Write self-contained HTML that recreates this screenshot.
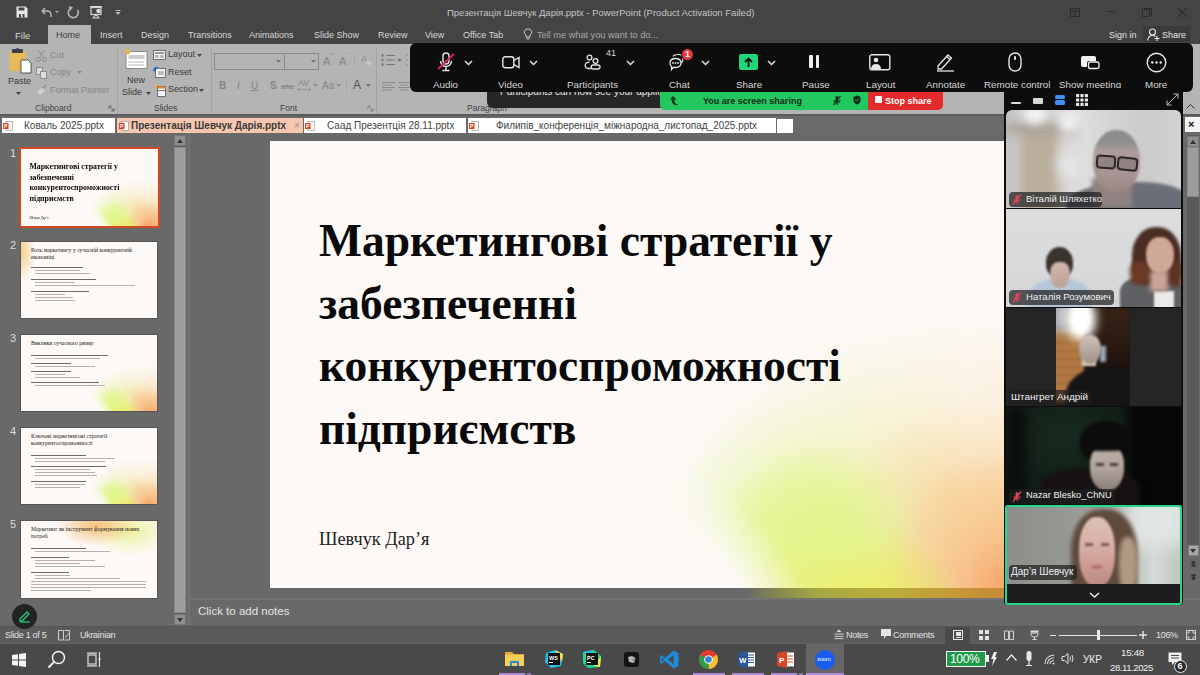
<!DOCTYPE html>
<html><head><meta charset="utf-8">
<style>
*{margin:0;padding:0;box-sizing:border-box}
html,body{width:1200px;height:675px;overflow:hidden;background:#666;font-family:"Liberation Sans",sans-serif}
.a{position:absolute;white-space:nowrap}
svg{position:absolute;overflow:visible}
#title{left:0;top:0;width:1200px;height:44px;background:#444}
#ribbon{left:0;top:44px;width:1200px;height:70px;background:#b4b4b4}
#ribstrip{left:0;top:114px;width:1200px;height:20px;background:#6a6a6a;border-top:2px solid #5a5a5a;border-bottom:1px solid #7a7a7a}
#status{left:0;top:626px;width:1200px;height:18px;background:#5b5b5b;border-top:1px solid #545454;border-bottom:1px solid #626262}
#taskbar{left:0;top:644px;width:1200px;height:31px;background:#494949}
.tt{color:#d8d8d8;font-size:9px;top:30px}
.rt{color:#3a3a3a;font-size:9px}
.rd{color:#858585;font-size:9px}
.gl{color:#404040;font-size:8.5px;top:103px}
.sep{width:1px;background:#a2a2a2;top:48px;height:66px}
.dtab{top:118px;height:15px;background:#fff;font-size:10px;color:#444;line-height:15px}
.picon{top:121px;width:10px;height:10px}

.thumb{background:#fcf9f6;overflow:hidden}
.tl{position:absolute;left:10px;height:1px;background:#b4b2b0}
.mg{position:absolute;left:0;top:0;width:795px;height:447px;overflow:hidden}
.mg::before{content:"";position:absolute;left:0;top:0;width:795px;height:447px;
 background:conic-gradient(from 0deg at 700px 470px,#fbefdc 0deg,#f8d4a4 70deg,#f5a868 115deg,#f4b060 170deg,#f0e068 215deg,#e0f488 255deg,#e2f592 295deg,#f2f2c4 325deg,#fbefdc 360deg);
 -webkit-mask-image:radial-gradient(ellipse 330px 300px at 700px 470px,#000 0%,#000 50%,rgba(0,0,0,0.75) 70%,rgba(0,0,0,0) 100%);
 mask-image:radial-gradient(ellipse 330px 300px at 700px 470px,#000 0%,#000 50%,rgba(0,0,0,0.75) 70%,rgba(0,0,0,0) 100%)}
.mg::after{content:"";position:absolute;left:0;top:0;width:795px;height:447px;
 background:radial-gradient(circle 265px at 300px 565px,rgba(252,249,246,1) 0%,rgba(252,249,246,1) 78%,rgba(252,249,246,0) 100%),
 radial-gradient(ellipse 100px 80px at 552px 382px,rgba(226,245,140,0.95) 0%,rgba(226,245,140,0.6) 45%,rgba(226,245,140,0) 100%),
 radial-gradient(ellipse 120px 100px at 690px 360px,rgba(247,205,135,0.6) 0%,rgba(247,205,135,0.3) 50%,rgba(247,205,135,0) 100%),
 radial-gradient(ellipse 110px 60px at 580px 440px,rgba(242,236,104,0.9) 0%,rgba(242,236,104,0.5) 50%,rgba(242,236,104,0) 100%),
 radial-gradient(ellipse 130px 130px at 735px 440px,rgba(245,160,96,0.9) 0%,rgba(245,160,96,0.45) 50%,rgba(245,160,96,0) 100%)}
.tg1{position:absolute;left:0;top:0;width:137px;height:77px;background:radial-gradient(ellipse 30px 20px at 90px 62px,rgba(225,245,140,1),rgba(225,245,140,0)),radial-gradient(ellipse 34px 19px at 102px 75px,rgba(242,232,95,1),rgba(242,232,95,0)),radial-gradient(ellipse 26px 30px at 126px 72px,rgba(247,165,95,1),rgba(247,165,95,0))}
.tg2{position:absolute;left:0;top:0;width:138px;height:78px;background:radial-gradient(ellipse 14px 30px at 0px 10px,rgba(245,200,120,0.9),rgba(245,200,120,0))}
.tg3{position:absolute;left:0;top:0;width:138px;height:78px;background:radial-gradient(ellipse 30px 18px at 100px 75px,rgba(235,240,120,1),rgba(235,240,120,0)),radial-gradient(ellipse 25px 25px at 130px 70px,rgba(247,165,95,1),rgba(247,165,95,0))}
.tg5{position:absolute;left:0;top:0;width:138px;height:79px;background:radial-gradient(ellipse 40px 20px at 75px 5px,rgba(247,185,110,0.9),rgba(247,185,110,0)),radial-gradient(ellipse 40px 25px at 110px 10px,rgba(235,240,140,0.8),rgba(235,240,140,0))}

.zl{top:79px;font-size:9.8px;color:#d4d4d4}
.chev{position:absolute;top:60px;width:9px;height:6px;overflow:visible}
.chev path{fill:none;stroke:#e0e0e0;stroke-width:1.5}

.tile{overflow:hidden}
.bl{position:absolute}
.lab{height:15px;background:rgba(30,30,30,0.72);border-radius:4px}
.mic{position:absolute;width:10px;height:11px}
.nm{font-size:9.5px;color:#f0f0f0}

.st{top:629.5px;font-size:9px;letter-spacing:-0.3px;color:#e2e2e2}
.ul{top:673px;height:2px;background:#a98ad6}
</style></head><body>
<div id="title" class="a"></div>
<!-- quick access -->
<svg style="left:16px;top:6px" width="12" height="12" viewBox="0 0 12 12"><path d="M0.5 0.5 H9.5 L11.5 2.5 V11.5 H0.5z" fill="#e8e8e8"/><rect x="2.5" y="1.5" width="6" height="3" fill="#444"/><rect x="3" y="8" width="2" height="3.5" fill="#444"/><rect x="6.5" y="8" width="2" height="3.5" fill="#444"/></svg>
<svg style="left:39px;top:6px" width="20" height="13" viewBox="0 0 20 13"><path d="M3 5 L8 5 Q12 5 12 9 L12 11 M3 5 L6 2 M3 5 L6 8" fill="none" stroke="#b8b8b8" stroke-width="1.5"/><path d="M16 5 L20 5 L18 7z" fill="#b8b8b8"/></svg>
<svg style="left:67px;top:6px" width="13" height="13" viewBox="0 0 13 13"><path d="M4 2.2 A5 5 0 1 0 10.5 4" fill="none" stroke="#b8b8b8" stroke-width="1.6"/><path d="M1.5 0.5 L6 1 L3.5 4.5z" fill="#b8b8b8"/></svg>
<svg style="left:89px;top:5px" width="15" height="15" viewBox="0 0 15 15"><rect x="1" y="1" width="12" height="1.4" fill="#d8d8d8"/><rect x="2" y="2.5" width="10" height="7" fill="none" stroke="#d8d8d8" stroke-width="1.2"/><path d="M7 9.5 L4 13 L10 13z" fill="none" stroke="#d8d8d8" stroke-width="1.1"/><circle cx="9.5" cy="6" r="2.3" fill="#d8d8d8"/></svg>
<svg style="left:115px;top:10px" width="6" height="6" viewBox="0 0 6 6"><rect x="0.5" y="0" width="5" height="1" fill="#bbb"/><path d="M0.5 2 L5.5 2 L3 5z" fill="#bbb"/></svg>
<div class="a" style="left:447px;top:7px;font-size:9.5px;color:#c4c4c4">Презентація Шевчук Дарія.pptx - PowerPoint (Product Activation Failed)</div>
<!-- window buttons -->
<svg style="left:1070px;top:8px" width="10" height="9" viewBox="0 0 10 9"><rect x="0.5" y="0.5" width="9" height="8" fill="none" stroke="#2c2c2c"/><path d="M0.5 3 H9.5 M5 3 V8.5" stroke="#2c2c2c"/></svg>
<div class="a" style="left:1106px;top:11px;width:9px;height:1px;background:#2c2c2c"></div>
<svg style="left:1142px;top:8px" width="10" height="9" viewBox="0 0 10 9"><rect x="0.5" y="1.5" width="7" height="7" fill="none" stroke="#2c2c2c"/><path d="M2 1.5 V0.5 H9.5 V7 H8" fill="none" stroke="#2c2c2c"/></svg>
<svg style="left:1178px;top:8px" width="9" height="9" viewBox="0 0 9 9"><path d="M0 0 L9 9 M9 0 L0 9" stroke="#2c2c2c" stroke-width="1.1"/></svg>
<!-- tabs -->
<div class="a" style="left:48px;top:25px;width:43px;height:19px;background:#b4b4b4"></div>
<div class="a tt" style="left:15px;font-size:9.5px">File</div>
<div class="a tt" style="left:56px;color:#3c3c3c">Home</div>
<div class="a tt" style="left:100px">Insert</div>
<div class="a tt" style="left:141px">Design</div>
<div class="a tt" style="left:188px">Transitions</div>
<div class="a tt" style="left:249px">Animations</div>
<div class="a tt" style="left:314px">Slide Show</div>
<div class="a tt" style="left:378px">Review</div>
<div class="a tt" style="left:425px">View</div>
<div class="a tt" style="left:463px">Office Tab</div>
<svg style="left:524px;top:28px" width="8" height="12" viewBox="0 0 8 12"><path d="M4 1 A3.2 3.2 0 0 1 6 7 L6 9 L2 9 L2 7 A3.2 3.2 0 0 1 4 1z" fill="none" stroke="#c8c8c8" stroke-width="1"/><rect x="2.5" y="10" width="3" height="1.2" fill="#c8c8c8"/></svg>
<div class="a tt" style="left:537px;color:#a8a8a8;font-size:9.2px">Tell me what you want to do...</div>
<div class="a tt" style="left:1109px;color:#e0e0e0">Sign in</div>
<div class="a" style="left:1143px;top:26px;width:47px;height:16px;background:#3a3a3a"></div>
<svg style="left:1147px;top:28px" width="13" height="13" viewBox="0 0 13 13"><circle cx="5.5" cy="4" r="3" fill="none" stroke="#e8e8e8" stroke-width="1.1"/><path d="M0.5 12.5 Q1.5 7.5 5.5 7.5 Q7.5 7.5 8.5 8.5" fill="none" stroke="#e8e8e8" stroke-width="1.1"/><path d="M10 8 V13 M7.5 10.5 H12.5" stroke="#e8e8e8" stroke-width="1.1"/></svg>
<div class="a tt" style="left:1162px;color:#e8e8e8">Share</div>

<div id="ribbon" class="a"></div>
<!-- clipboard -->
<svg style="left:9px;top:48px" width="24" height="26" viewBox="0 0 24 26"><rect x="0.5" y="3" width="16.5" height="20" fill="#e8b95a"/><rect x="3" y="1" width="11" height="4" rx="1" fill="#3c3c4c"/><circle cx="8.5" cy="1.5" r="1.5" fill="#3c3c4c"/><path d="M12 12 H19 L22 15 V25 H12z" fill="#fff" stroke="#333" stroke-width="0.8"/></svg>
<div class="a rt" style="left:8px;top:76px;font-size:9px">Paste</div>
<svg style="left:16px;top:92px" width="5" height="3" viewBox="0 0 5 3"><path d="M0 0 H5 L2.5 3z" fill="#444"/></svg>
<svg style="left:36px;top:50px" width="11" height="12" viewBox="0 0 11 12"><path d="M2 0 L8 8 M9 0 L3 8" stroke="#8c8c8c" stroke-width="1"/><circle cx="2.5" cy="9.5" r="2" fill="none" stroke="#8c8c8c"/><circle cx="8.5" cy="9.5" r="2" fill="none" stroke="#8c8c8c"/></svg>
<div class="a rd" style="left:50px;top:50px;font-size:9px">Cut</div>
<svg style="left:36px;top:67px" width="11" height="12" viewBox="0 0 11 12"><rect x="0.5" y="0.5" width="6" height="7" fill="#ddd" stroke="#8c8c8c"/><rect x="4.5" y="4.5" width="6" height="7" fill="#ddd" stroke="#8c8c8c"/></svg>
<div class="a rd" style="left:50px;top:67px;font-size:9px">Copy</div>
<svg style="left:77px;top:71px" width="5" height="3" viewBox="0 0 5 3"><path d="M0 0 H5 L2.5 3z" fill="#8c8c8c"/></svg>
<svg style="left:37px;top:85px" width="10" height="10" viewBox="0 0 10 10"><path d="M0 7 L5 3 L8 6 L3 10z" fill="#cfcfcf"/><path d="M6 3 L9 0" stroke="#8c8c8c" stroke-width="1.5"/></svg>
<div class="a rd" style="left:50px;top:85px;font-size:9px">Format Painter</div>
<div class="a gl" style="left:35px">Clipboard</div>
<svg style="left:109px;top:106px" width="5" height="5" viewBox="0 0 5 5"><path d="M0 0 H3 M0 0 V3 M1 1 L5 5 M5 2 V5 H2" stroke="#555" stroke-width="0.8" fill="none"/></svg>
<div class="a sep" style="left:117px"></div>
<!-- slides -->
<svg style="left:124px;top:48px" width="24" height="22" viewBox="0 0 24 22"><rect x="2" y="3.5" width="21" height="17" fill="#fff" stroke="#777" stroke-width="0.8"/><rect x="4.5" y="7" width="16" height="4" fill="#ccc"/><path d="M4.5 14 H20 M4.5 17 H20" stroke="#aaa" stroke-width="0.8"/><circle cx="3.5" cy="3.5" r="3" fill="#e0b060"/></svg>
<div class="a rt" style="left:127px;top:75px;font-size:9px">New</div>
<div class="a rt" style="left:122px;top:87px;font-size:9px">Slide</div>
<svg style="left:146px;top:92px" width="5" height="3" viewBox="0 0 5 3"><path d="M0 0 H5 L2.5 3z" fill="#444"/></svg>
<svg style="left:153px;top:50px" width="13" height="10" viewBox="0 0 13 10"><rect x="0.5" y="0.5" width="12" height="9" fill="#f4f4f4" stroke="#555" stroke-width="0.8"/><rect x="2" y="2" width="9" height="2" fill="#999"/><rect x="2" y="5" width="4" height="3" fill="#bbb"/><rect x="7" y="5" width="4" height="3" fill="#bbb"/></svg>
<div class="a rt" style="left:168px;top:49px;font-size:9px">Layout</div>
<svg style="left:197px;top:54px" width="5" height="3" viewBox="0 0 5 3"><path d="M0 0 H5 L2.5 3z" fill="#444"/></svg>
<svg style="left:153px;top:66px" width="13" height="12" viewBox="0 0 13 12"><rect x="2.5" y="2.5" width="10" height="9" fill="#f4f4f4" stroke="#555" stroke-width="0.8"/><rect x="5" y="5" width="6" height="4" fill="#bbb"/><path d="M1 5 Q1 1 5 1.5" fill="none" stroke="#2a6ab8" stroke-width="1.6"/><path d="M0 3.5 L2 6 L3.5 3z" fill="#2a6ab8"/></svg>
<div class="a rt" style="left:168px;top:67px;font-size:9px">Reset</div>
<svg style="left:154px;top:84px" width="12" height="13" viewBox="0 0 12 13"><circle cx="2.5" cy="2.5" r="2.3" fill="#e0b060"/><rect x="3.5" y="2.5" width="8" height="10" fill="#f4f4f4" stroke="#555" stroke-width="0.8"/><rect x="3.5" y="2.5" width="8" height="2" fill="#e08a3c"/><path d="M3.5 6.5 H11.5" stroke="#555" stroke-width="0.8"/></svg>
<div class="a rt" style="left:168px;top:84px;font-size:9px">Section</div>
<svg style="left:199px;top:89px" width="5" height="3" viewBox="0 0 5 3"><path d="M0 0 H5 L2.5 3z" fill="#444"/></svg>
<div class="a gl" style="left:154px">Slides</div>
<div class="a sep" style="left:211px"></div>
<!-- font -->
<div class="a" style="left:214px;top:53px;width:105px;height:17px;border:1px solid #8a8a8a"></div>
<div class="a" style="left:284px;top:53px;width:1px;height:17px;background:#8a8a8a"></div>
<svg style="left:276px;top:60px" width="5" height="3" viewBox="0 0 5 3"><path d="M0 0 H5 L2.5 3z" fill="#777"/></svg>
<svg style="left:311px;top:60px" width="5" height="3" viewBox="0 0 5 3"><path d="M0 0 H5 L2.5 3z" fill="#777"/></svg>
<div class="a rd" style="left:323px;top:55px;font-size:11px">A</div><div class="a rd" style="left:330px;top:52px;font-size:6px">^</div>
<div class="a rd" style="left:339px;top:55px;font-size:11px">A</div><div class="a rd" style="left:346px;top:52px;font-size:6px">ˇ</div>
<div class="a" style="left:354px;top:54px;width:1px;height:13px;background:#a6a6a6"></div>
<div class="a rd" style="left:361px;top:54px;font-size:9px">A</div>
<svg style="left:365px;top:60px" width="7" height="6" viewBox="0 0 7 6"><path d="M0 3 L3 0 L7 3 L4 6z" fill="#c4c4c4"/></svg>
<div class="a rd" style="left:219px;top:80px;font-size:10px;font-weight:bold">B</div>
<div class="a rd" style="left:237px;top:80px;font-size:10px;font-style:italic">I</div>
<div class="a rd" style="left:251px;top:80px;font-size:10px;text-decoration:underline">U</div>
<div class="a rd" style="left:270px;top:80px;font-size:10px;font-weight:bold">S</div>
<div class="a rd" style="left:281px;top:82px;font-size:8px;text-decoration:line-through">abc</div>
<div class="a rd" style="left:298px;top:78px;font-size:9px">AV</div>
<svg style="left:298px;top:88px" width="13" height="3" viewBox="0 0 13 3"><path d="M0 1.5 H13 M0 1.5 L2 0 M0 1.5 L2 3 M13 1.5 L11 0 M13 1.5 L11 3" stroke="#8c8c8c" stroke-width="0.7"/></svg>
<svg style="left:313px;top:84px" width="5" height="3" viewBox="0 0 5 3"><path d="M0 0 H5 L2.5 3z" fill="#8c8c8c"/></svg>
<div class="a rd" style="left:322px;top:80px;font-size:10px">Aa</div>
<svg style="left:336px;top:84px" width="5" height="3" viewBox="0 0 5 3"><path d="M0 0 H5 L2.5 3z" fill="#8c8c8c"/></svg>
<div class="a" style="left:346px;top:78px;width:1px;height:14px;background:#a6a6a6"></div>
<div class="a rt" style="left:353px;top:78px;font-size:12px;color:#555">A</div>
<svg style="left:366px;top:84px" width="5" height="3" viewBox="0 0 5 3"><path d="M0 0 H5 L2.5 3z" fill="#777"/></svg>
<div class="a gl" style="left:280px">Font</div>
<svg style="left:368px;top:106px" width="5" height="5" viewBox="0 0 5 5"><path d="M0 0 H3 M0 0 V3 M1 1 L5 5 M5 2 V5 H2" stroke="#777" stroke-width="0.8" fill="none"/></svg>
<div class="a sep" style="left:376px"></div>
<!-- paragraph -->
<svg style="left:381px;top:54px" width="18" height="12" viewBox="0 0 18 12"><g fill="#777"><circle cx="1.5" cy="1.5" r="1.2"/><circle cx="1.5" cy="6" r="1.2"/><circle cx="1.5" cy="10.5" r="1.2"/></g><path d="M5 1.5 H14 M5 6 H14 M5 10.5 H14" stroke="#777" stroke-width="1"/></svg>
<svg style="left:397px;top:59px" width="5" height="3" viewBox="0 0 5 3"><path d="M0 0 H5 L2.5 3z" fill="#777"/></svg>
<svg style="left:405px;top:54px" width="4" height="12" viewBox="0 0 4 12"><path d="M1 1 H3 M1 6 H3 M1 11 H3" stroke="#888" stroke-width="0.8"/></svg>
<svg style="left:382px;top:82px" width="13" height="9" viewBox="0 0 13 9"><path d="M0 0.5 H13 M0 3 H10 M0 5.5 H13 M0 8 H10" stroke="#888" stroke-width="0.9"/></svg>
<svg style="left:398px;top:82px" width="12" height="9" viewBox="0 0 12 9"><path d="M0 0.5 H12 M2 3 H10 M0 5.5 H12 M2 8 H10" stroke="#888" stroke-width="0.9"/></svg>
<div class="a gl" style="left:467px">Paragraph</div>

<div id="ribstrip" class="a"></div>
<!-- doc tabs -->
<div class="a dtab" style="left:2px;width:113px"><span style="position:absolute;left:22px">Коваль 2025.pptx</span></div>
<div class="a dtab" style="left:117px;width:186px;background:#f6c6ae;color:#3a3a3a;font-weight:bold"><span style="position:absolute;left:14px">Презентація Шевчук Дарія.pptx</span><span style="position:absolute;left:177px;font-weight:normal;color:#999;font-size:10px">×</span></div>
<div class="a dtab" style="left:304px;width:162px"><span style="position:absolute;left:23px">Саад Презентція 28.11.pptx</span></div>
<div class="a dtab" style="left:468px;width:308px"><span style="position:absolute;left:28px">Филипів_конференція_міжнародна_листопад_2025.pptx</span></div>
<div class="a dtab" style="left:777px;width:16px;top:119px;height:14px"></div>
<svg class="picon" style="left:3px" viewBox="0 0 10 10"><rect x="3" y="0.5" width="6.5" height="9" fill="#fff" stroke="#999" stroke-width="0.7"/><rect x="0" y="2" width="5.5" height="6" fill="#d04423"/><text x="1" y="7" font-size="5" fill="#fff" font-family="Liberation Sans" font-weight="bold">P</text></svg>
<svg class="picon" style="left:119px" viewBox="0 0 10 10"><rect x="3" y="0.5" width="6.5" height="9" fill="#fff" stroke="#999" stroke-width="0.7"/><rect x="0" y="2" width="5.5" height="6" fill="#d04423"/><text x="1" y="7" font-size="5" fill="#fff" font-family="Liberation Sans" font-weight="bold">P</text></svg>
<svg class="picon" style="left:305px" viewBox="0 0 10 10"><rect x="3" y="0.5" width="6.5" height="9" fill="#fff" stroke="#999" stroke-width="0.7"/><rect x="0" y="2" width="5.5" height="6" fill="#d04423"/><text x="1" y="7" font-size="5" fill="#fff" font-family="Liberation Sans" font-weight="bold">P</text></svg>
<svg class="picon" style="left:469px" viewBox="0 0 10 10"><rect x="3" y="0.5" width="6.5" height="9" fill="#fff" stroke="#999" stroke-width="0.7"/><rect x="0" y="2" width="5.5" height="6" fill="#d04423"/><text x="1" y="7" font-size="5" fill="#fff" font-family="Liberation Sans" font-weight="bold">P</text></svg>


<!-- work area -->
<div class="a" style="left:0;top:133px;width:1200px;height:493px;background:#696969"></div>
<!-- thumbnails pane scrollbar -->
<div class="a" style="left:174px;top:135px;width:12px;height:490px;background:#5a5a5a"></div>
<div class="a" style="left:174px;top:135px;width:12px;height:11px;background:#8e8e8e;border:1px solid #777"></div>
<svg style="left:177px;top:139px" width="6" height="4" viewBox="0 0 6 4"><path d="M0 4 H6 L3 0z" fill="#333"/></svg>
<div class="a" style="left:174px;top:147px;width:12px;height:466px;background:#9c9c9c;border:1px solid #8a8a8a"></div>
<div class="a" style="left:174px;top:614px;width:12px;height:11px;background:#8e8e8e;border:1px solid #777"></div>
<svg style="left:177px;top:618px" width="6" height="4" viewBox="0 0 6 4"><path d="M0 0 H6 L3 4z" fill="#333"/></svg>
<div class="a" style="left:188px;top:133px;width:2px;height:493px;background:#737373"></div>
<!-- thumbnails -->
<div class="a" style="left:10px;top:147px;font-size:11px;color:#ddd">1</div>
<div class="a" style="left:10px;top:239px;font-size:11px;color:#ddd">2</div>
<div class="a" style="left:10px;top:332px;font-size:11px;color:#ddd">3</div>
<div class="a" style="left:10px;top:425px;font-size:11px;color:#ddd">4</div>
<div class="a" style="left:10px;top:518px;font-size:11px;color:#ddd">5</div>
<div class="a" style="left:19px;top:147px;width:141px;height:81px;background:#d24726"></div>
<div class="a thumb" style="left:21px;top:149px;width:137px;height:77px">
  <div style="position:absolute;left:0;top:0;width:795px;height:447px;transform:scale(0.1723);transform-origin:0 0;background:#fcf9f6">
  <div class="mg"></div>
  <div class="a" style="left:49px;top:69px;font-family:'Liberation Serif',serif;font-weight:bold;font-size:45.5px;line-height:62.5px;color:#0a0a0a">Маркетингові стратегії у<br>забезпеченні<br>конкурентоспроможності<br>підприємств</div>
  <div class="a" style="left:49px;top:388px;font-family:'Liberation Serif',serif;font-size:18.3px;color:#1e1e1e">Шевчук Дар’я</div>
  </div>
</div>
<div class="a thumb" style="left:20px;top:241px;width:138px;height:78px;border:1px solid #555">
  <div class="tg2"></div>
  <div class="a" style="left:10px;top:4.8px;font-family:'Liberation Serif',serif;font-size:5.7px;line-height:7.4px;color:#222">Роль маркетингу у сучасній конкурентній<br>економіці</div>
  <div class="tl" style="top:25px;width:52px;height:1.2px;background:#6e6c6a"></div>
  <div class="tl" style="top:28px;left:14px;width:45px"></div>
  <div class="tl" style="top:31px;left:14px;width:55px"></div>
  <div class="tl" style="top:37px;width:65px;height:1.2px;background:#6e6c6a"></div>
  <div class="tl" style="top:40px;left:14px;width:40px"></div>
  <div class="tl" style="top:43px;left:14px;width:100px"></div>
  <div class="tl" style="top:49px;width:58px;height:1.2px;background:#6e6c6a"></div>
  <div class="tl" style="top:52px;left:14px;width:30px"></div>
  <div class="tl" style="top:55px;left:14px;width:38px"></div>
  <div class="tl" style="top:58px;left:14px;width:40px"></div>
</div>
<div class="a thumb" style="left:20px;top:334px;width:138px;height:78px;border:1px solid #555">
  <div style="position:absolute;left:0;top:0;width:795px;height:447px;transform:scale(0.1723);transform-origin:0 0"><div class="mg"></div></div>
  <div class="a" style="left:10px;top:4.5px;font-family:'Liberation Serif',serif;font-size:5.7px;line-height:7.4px;color:#222">Виклики сучасного ринку</div>
  <div class="tl" style="top:20px;width:77px;height:1.2px;background:#6e6c6a"></div>
  <div class="tl" style="top:23px;left:14px;width:65px"></div>
  <div class="tl" style="top:28px;width:40px;height:1.2px;background:#6e6c6a"></div>
  <div class="tl" style="top:31px;left:14px;width:60px"></div>
  <div class="tl" style="top:36px;width:40px;height:1.2px;background:#6e6c6a"></div>
  <div class="tl" style="top:39px;left:14px;width:30px"></div>
  <div class="tl" style="top:42px;left:14px;width:45px"></div>
  <div class="tl" style="top:47px;width:68px;height:1.2px;background:#6e6c6a"></div>
  <div class="tl" style="top:50px;left:14px;width:70px"></div>
</div>
<div class="a thumb" style="left:20px;top:427px;width:138px;height:78px;border:1px solid #555">
  <div style="position:absolute;left:0;top:0;width:795px;height:447px;transform:scale(0.1723);transform-origin:0 0"><div class="mg"></div></div>
  <div class="a" style="left:10px;top:4.8px;font-family:'Liberation Serif',serif;font-size:5.7px;line-height:7.4px;color:#222">Ключові маркетингові стратегії<br>конкурентоспроможності</div>
  <div class="tl" style="top:27px;width:55px;height:1.2px;background:#6e6c6a"></div>
  <div class="tl" style="top:30px;left:14px;width:80px"></div>
  <div class="tl" style="top:33px;left:14px;width:70px"></div>
  <div class="tl" style="top:38px;width:75px;height:1.2px;background:#6e6c6a"></div>
  <div class="tl" style="top:41px;left:14px;width:55px"></div>
  <div class="tl" style="top:44px;left:14px;width:60px"></div>
  <div class="tl" style="top:47px;left:14px;width:62px"></div>
  <div class="tl" style="top:53px;width:55px;height:1.2px;background:#6e6c6a"></div>
  <div class="tl" style="top:56px;left:14px;width:50px"></div>
  <div class="tl" style="top:59px;left:14px;width:45px"></div>
</div>
<div class="a thumb" style="left:20px;top:520px;width:138px;height:79px;border:1px solid #555">
  <div class="tg5"></div>
  <div class="a" style="left:10px;top:4.8px;font-family:'Liberation Serif',serif;font-size:5.7px;line-height:7.4px;color:#222">Маркетинг як інструмент формування нових<br>потреб</div>
  <div class="tl" style="top:27px;width:55px;height:1.2px;background:#6e6c6a"></div>
  <div class="tl" style="top:30px;left:14px;width:75px"></div>
  <div class="tl" style="top:36px;width:38px;height:1.2px;background:#6e6c6a"></div>
  <div class="tl" style="top:39px;left:14px;width:60px"></div>
  <div class="tl" style="top:42px;left:14px;width:45px"></div>
  <div class="tl" style="top:45px;left:14px;width:70px"></div>
  <div class="tl" style="top:51px;width:38px;height:1.2px;background:#6e6c6a"></div>
  <div class="tl" style="top:54px;left:14px;width:35px"></div>
  <div class="tl" style="top:57px;left:14px;width:85px"></div>
  <div class="tl" style="top:60px;width:115px"></div>
  <div class="tl" style="top:63px;width:115px"></div>
  <div class="tl" style="top:66px;width:115px"></div>
  <div class="tl" style="top:69px;width:60px"></div>
</div>
<!-- main slide -->
<div class="a" id="slide" style="left:270px;top:141px;width:795px;height:447px;background:#fcf9f6;overflow:hidden">
  <div class="mg"></div>
  <div class="a" style="left:49px;top:69px;font-family:'Liberation Serif',serif;font-weight:bold;font-size:45.5px;line-height:62.5px;color:#0a0a0a">Маркетингові стратегії у<br>забезпеченні<br>конкурентоспроможності<br>підприємств</div>
  <div class="a" style="left:49px;top:388px;font-family:'Liberation Serif',serif;font-size:18.3px;color:#1e1e1e">Шевчук Дар’я</div>
</div>
<div class="a" style="left:270px;top:588px;width:795px;height:10px;background:linear-gradient(90deg,#696969 0%,#696969 60%,#868a4c 64%,#a6a844 69%,#bcac3a 78%,#c49c36 85%,#c88438 94%,#c87838 100%)"></div>
<div class="a" style="left:190px;top:598px;width:1010px;height:2px;background:#737373"></div>
<div class="a" style="left:198px;top:605.3px;font-size:11.5px;color:#e4e4e4">Click to add notes</div>
<!-- right scrollbar -->
<div class="a" style="left:1185px;top:117px;width:15px;height:15px;background:#f4f4f4"></div>
<div class="a" style="left:1188px;top:118px;font-size:11px;font-weight:bold;color:#111">×</div>
<svg style="left:1186px;top:104px" width="9" height="5" viewBox="0 0 9 5"><path d="M0.5 4.5 L4.5 0.5 L8.5 4.5" fill="none" stroke="#333" stroke-width="1"/></svg>
<div class="a" style="left:1187px;top:135px;width:12px;height:421px;background:#5a5a5a"></div>
<div class="a" style="left:1187px;top:136px;width:12px;height:11px;background:#8e8e8e;border:1px solid #777"></div>
<svg style="left:1190px;top:140px" width="6" height="4" viewBox="0 0 6 4"><path d="M0 4 H6 L3 0z" fill="#333"/></svg>
<div class="a" style="left:1187px;top:147px;width:12px;height:50px;background:#9c9c9c;border:1px solid #8a8a8a"></div>
<div class="a" style="left:1187.5px;top:545px;width:11px;height:11px;background:#a6a6a6;border:1px solid #808080"></div>
<svg style="left:1190px;top:549px" width="6" height="4" viewBox="0 0 6 4"><path d="M0 0 H6 L3 4z" fill="#333"/></svg>
<svg style="left:1190px;top:560px" width="7" height="7" viewBox="0 0 7 7"><path d="M0.5 3.5 L3.5 0.5 L6.5 3.5z M0.5 6.5 L3.5 3.5 L6.5 6.5z" fill="#2e2e2e"/></svg><svg style="left:1190px;top:573.5px" width="7" height="7" viewBox="0 0 7 7"><path d="M0.5 0.5 L3.5 3.5 L6.5 0.5z M0.5 3.5 L3.5 6.5 L6.5 3.5z" fill="#2e2e2e"/></svg>


<div id="status" class="a"></div>
<div class="a st" style="left:5px">Slide 1 of 5</div>
<svg style="left:58px;top:630px" width="12" height="11" viewBox="0 0 12 11"><path d="M0.5 0.5 H5.5 V10 H0.5z M6.5 0.5 H11.5 V10 H6.5" fill="none" stroke="#dcdcdc" stroke-width="0.9"/><path d="M7.5 7.5 L10.5 3.5" stroke="#dcdcdc" stroke-width="0.9"/></svg>
<div class="a st" style="left:80px">Ukrainian</div>
<svg style="left:834px;top:629px" width="10" height="11" viewBox="0 0 10 11"><path d="M2.5 3 L5 0.5 L7.5 3z" fill="#dcdcdc"/><path d="M0.5 5 H9.5 M0.5 7.3 H9.5 M0.5 9.6 H9.5" stroke="#dcdcdc" stroke-width="0.9"/></svg>
<div class="a st" style="left:846px">Notes</div>
<svg style="left:881px;top:629px" width="10" height="11" viewBox="0 0 10 11"><path d="M0 0 H10 V7 H5 L3 10 L3 7 H0z" fill="#e4e4e4"/></svg>
<div class="a st" style="left:893px">Comments</div>
<div class="a" style="left:945px;top:627px;width:25px;height:17px;background:#4a4a4a"></div>
<svg style="left:953px;top:630px" width="10" height="10" viewBox="0 0 10 10"><rect x="0.5" y="0.5" width="9" height="9" fill="none" stroke="#e8e8e8"/><rect x="3" y="2" width="5" height="4" fill="#e8e8e8"/><path d="M3 7.5 H8" stroke="#e8e8e8"/></svg>
<svg style="left:979px;top:630px" width="10" height="10" viewBox="0 0 10 10"><g fill="#e4e4e4"><rect x="0" y="0" width="4" height="4"/><rect x="6" y="0" width="4" height="4"/><rect x="0" y="6" width="4" height="4"/><rect x="6" y="6" width="4" height="4"/></g></svg>
<svg style="left:1004px;top:630px" width="10" height="10" viewBox="0 0 10 10"><path d="M0.5 1 H4.5 V9.5 H0.5z M5.5 1 H9.5 V9.5 H5.5z" fill="none" stroke="#dcdcdc" stroke-width="0.9"/></svg>
<svg style="left:1030px;top:630px" width="9" height="10" viewBox="0 0 9 10"><rect x="0.5" y="0.5" width="8" height="2" fill="#dcdcdc"/><path d="M1 3 H8 V5 Q8 7 4.5 7 Q1 7 1 5z" fill="none" stroke="#dcdcdc" stroke-width="0.9"/><path d="M4.5 7 V9 M2.5 9.5 H6.5" stroke="#dcdcdc"/></svg>
<div class="a" style="left:1050px;top:634.5px;width:6px;height:1.5px;background:#e4e4e4"></div>
<div class="a" style="left:1059px;top:635px;width:78px;height:1px;background:#e4e4e4"></div>
<div class="a" style="left:1097px;top:630px;width:3px;height:10px;background:#eaeaea"></div>
<svg style="left:1139px;top:631px" width="8" height="8" viewBox="0 0 8 8"><path d="M4 0 V8 M0 4 H8" stroke="#e4e4e4" stroke-width="1.5"/></svg>
<div class="a st" style="left:1156px">106%</div>
<svg style="left:1186px;top:630px" width="10" height="10" viewBox="0 0 10 10"><rect x="0.5" y="0.5" width="9" height="9" fill="none" stroke="#dcdcdc" stroke-width="0.9"/><path d="M3 0.5 V3 H0.5 M7 0.5 V3 H9.5 M0.5 7 H3 V9.5 M9.5 7 H7 V9.5" fill="none" stroke="#dcdcdc" stroke-width="0.9"/></svg>


<div id="taskbar" class="a"></div>
<svg style="left:12px;top:653px" width="14" height="14" viewBox="0 0 14 14"><path d="M0 2 L6 1.2 V6.6 H0z M7 1 L14 0 V6.6 H7z M0 7.4 H6 V12.8 L0 12z M7 7.4 H14 V14 L7 13z" fill="#f4f4f4"/></svg>
<svg style="left:47px;top:650px" width="19" height="19" viewBox="0 0 19 19"><circle cx="11.5" cy="7.5" r="6" fill="none" stroke="#f4f4f4" stroke-width="1.5"/><path d="M7.5 11.5 L1.5 17.5" stroke="#f4f4f4" stroke-width="2"/></svg>
<svg style="left:87px;top:652px" width="14" height="15" viewBox="0 0 14 15"><rect x="1" y="3" width="8" height="9" fill="none" stroke="#dcdcdc" stroke-width="1.2"/><path d="M0 1.2 H10 M0 13.8 H10" stroke="#dcdcdc" stroke-width="1.2"/><path d="M12.5 0 V15" stroke="#dcdcdc" stroke-width="1.2"/><circle cx="12.5" cy="7" r="1" fill="#fff"/></svg>
<!-- explorer -->
<svg style="left:505px;top:651px" width="19" height="16" viewBox="0 0 19 16"><path d="M0 1 H7 L9 3 H19 V15 H0z" fill="#e8a83a"/><rect x="0" y="4" width="19" height="11" fill="#f6cf5a"/><rect x="5" y="10" width="9" height="5" fill="#2b8ad8"/><rect x="7" y="12" width="5" height="3" fill="#f6cf5a"/></svg>
<div class="a ul" style="left:499px;width:26px"></div><div class="a ul" style="left:527px;width:4px;opacity:0.7"></div>
<!-- webstorm -->
<svg style="left:545px;top:650px" width="18" height="18" viewBox="0 0 18 18"><path d="M1 3 L10 0 L18 4 L16 16 L6 18 L0 12z" fill="#23c0f0"/><path d="M10 0 L18 4 L17 12z" fill="#f7e04a"/><rect x="3" y="3" width="12" height="12" fill="#111"/><text x="4" y="10" font-size="5.5" font-family="Liberation Sans" font-weight="bold" fill="#fff">WS</text><rect x="4" y="12" width="4" height="1" fill="#fff"/></svg>
<!-- pycharm -->
<svg style="left:583px;top:650px" width="18" height="18" viewBox="0 0 18 18"><path d="M0 2 L11 0 L18 6 L17 17 L5 18 L0 13z" fill="#21d789"/><path d="M0 2 L11 0 L6 8z" fill="#20c4e8"/><path d="M18 6 L17 17 L11 16z" fill="#fce64a"/><rect x="3" y="3" width="12" height="12" fill="#111"/><text x="4" y="10" font-size="5.5" font-family="Liberation Sans" font-weight="bold" fill="#fff">PC</text><rect x="4" y="12" width="4" height="1" fill="#fff"/></svg>
<!-- cube app -->
<div class="a" style="left:624px;top:652px;width:15px;height:15px;background:#141414;border-radius:3px"></div>
<svg style="left:627px;top:655px" width="9" height="9" viewBox="0 0 9 9"><path d="M1 2 L5 1 L8.5 3 L7 8 L2 7z" fill="#b8b8b8"/><path d="M5 4 L8.5 3 L7 8z" fill="#888"/></svg>
<!-- vscode -->
<svg style="left:660px;top:650px" width="19" height="19" viewBox="0 0 19 19"><path d="M13.5 0.5 L18.5 3 V16 L13.5 18.5 L5 11 L1.5 14 L0 13 V6 L1.5 5 L5 8z M13.5 5 L8 9.5 L13.5 14z M1.8 7 V12 L4 9.5z" fill="#1f8ad8"/></svg>
<!-- chrome -->
<svg style="left:699px;top:650px" width="19" height="19" viewBox="0 0 19 19"><circle cx="9.5" cy="9.5" r="9.5" fill="#e23a2e"/><path d="M9.5 9.5 L1.3 14.25 A9.5 9.5 0 0 1 0.95 5.2 L1.3 4.75 A9.5 9.5 0 0 1 9.5 0 L17.7 4.75z" fill="#e23a2e"/><path d="M9.5 9.5 L17.7 4.75 A9.5 9.5 0 0 1 9.5 19z" fill="#fbc02d"/><path d="M9.5 9.5 L9.5 19 A9.5 9.5 0 0 1 1.3 4.75z" fill="#2e9e48"/><circle cx="9.5" cy="9.5" r="4.3" fill="#fff"/><circle cx="9.5" cy="9.5" r="3.3" fill="#3b7de0"/></svg>
<div class="a ul" style="left:693px;width:32px"></div>
<!-- word -->
<svg style="left:738px;top:651px" width="18" height="17" viewBox="0 0 18 17"><rect x="7" y="1.5" width="10" height="14" fill="#fff"/><path d="M8.5 4 H16 M8.5 6.5 H16 M8.5 9 H16 M8.5 11.5 H16" stroke="#2b5797" stroke-width="1"/><path d="M0 2 L10 0 V17 L0 15z" fill="#2b5797"/><text x="1.2" y="11.5" font-size="7.5" font-family="Liberation Sans" font-weight="bold" fill="#fff">W</text></svg>
<div class="a ul" style="left:732px;width:32px"></div>
<!-- powerpoint -->
<svg style="left:777px;top:651px" width="18" height="17" viewBox="0 0 18 17"><rect x="7" y="1.5" width="10" height="14" fill="#fff"/><path d="M9 5 H16 M9 8 H16 M9 11 H16" stroke="#d24726" stroke-width="1"/><path d="M0 2 L10 0 V17 L0 15z" fill="#d24726"/><text x="2" y="11.5" font-size="8" font-family="Liberation Sans" font-weight="bold" fill="#fff">P</text></svg>
<div class="a ul" style="left:771px;width:26px"></div><div class="a ul" style="left:799px;width:4px;opacity:0.7"></div>
<!-- zoom -->
<div class="a" style="left:806px;top:644px;width:38px;height:31px;background:#666"></div>
<div class="a" style="left:815px;top:650px;width:20px;height:20px;border-radius:50%;background:#1a5cf0"></div>
<div class="a" style="left:817px;top:656px;font-size:6px;letter-spacing:-0.3px;color:#fff">zoom</div>
<div class="a ul" style="left:806px;width:38px"></div>
<!-- zoom annotate floating button -->
<div class="a" style="left:12px;top:604px;width:25px;height:25px;border-radius:50%;background:#232323"></div>
<svg style="left:18px;top:609px" width="14" height="14" viewBox="0 0 14 14"><path d="M2 10 L9 3 L11 5 L4 12 L2 12z" fill="none" stroke="#22c77a" stroke-width="1.3"/><path d="M2 13 H12" stroke="#22c77a" stroke-width="1.3"/></svg>
<!-- tray -->
<div class="a" style="left:946px;top:651px;width:40px;height:16px;border:1.5px solid #f4f4f4;background:#1f9a4a"></div>
<div class="a" style="left:986px;top:655px;width:2.5px;height:7px;background:#f4f4f4"></div>
<div class="a" style="left:950px;top:651.5px;font-size:12px;color:#fff;letter-spacing:-0.3px">100%</div>
<svg style="left:991px;top:652px" width="6" height="14" viewBox="0 0 6 14"><path d="M3 0 H6 L4 5 H6 L1 14 L2.5 7 H0z" fill="#f0f0f0"/></svg>
<svg style="left:1006px;top:654px" width="11" height="7" viewBox="0 0 11 7"><path d="M0.5 6.5 L5.5 1 L10.5 6.5" fill="none" stroke="#eee" stroke-width="1.2"/></svg>
<svg style="left:1025px;top:651px" width="8" height="15" viewBox="0 0 8 15"><rect x="1.5" y="0" width="5" height="10" rx="2.5" fill="#e8e8e8"/><path d="M4 10 V14 M1 14.5 H7" stroke="#e8e8e8" stroke-width="1.2"/></svg>
<svg style="left:1044px;top:653px" width="11" height="12" viewBox="0 0 11 12"><path d="M1 11 Q1 3 10 2 M3.5 11 Q3.5 5.5 10 4.8 M6 11 Q6 8 10 7.5" fill="none" stroke="#ddd" stroke-width="1.1"/><circle cx="9.5" cy="10.5" r="1" fill="#ddd"/></svg>
<svg style="left:1061px;top:652px" width="13" height="13" viewBox="0 0 13 13"><path d="M1 4.5 H3.5 L7 1.5 V11.5 L3.5 8.5 H1z" fill="none" stroke="#e4e4e4" stroke-width="1"/><path d="M9 4.5 Q10 6.5 9 8.5 M11 3 Q12.8 6.5 11 10" fill="none" stroke="#e4e4e4" stroke-width="1"/></svg>
<div class="a" style="left:1083px;top:654px;font-size:10px;color:#f0f0f0">УКР</div>
<div class="a" style="left:1121px;top:647px;font-size:9.8px;letter-spacing:-0.3px;color:#f0f0f0">15:48</div>
<div class="a" style="left:1110px;top:662px;font-size:9.6px;letter-spacing:-0.45px;color:#f0f0f0">28.11.2025</div>
<svg style="left:1168px;top:652px" width="14" height="14" viewBox="0 0 14 14"><path d="M0.5 0.5 H13.5 V10 H7 L4 13 V10 H0.5z" fill="#f0f0f0"/><path d="M3 3.5 H11 M3 6 H11" stroke="#494949" stroke-width="1"/></svg>
<div class="a" style="left:1174px;top:660px;width:13px;height:13px;border-radius:50%;background:#2a2a2a;border:1px solid #eee"></div>
<div class="a" style="left:1177.5px;top:661px;font-size:9px;color:#fff;font-weight:bold">6</div>


<!-- zoom notification (behind toolbar) -->
<div class="a" style="left:487px;top:80px;width:190px;height:28px;background:#262626;border-radius:6px"></div>
<div class="a" style="left:500px;top:85.5px;font-size:10px;color:#e8e8e8">Participants can now see your application</div>
<!-- zoom toolbar -->
<div class="a" style="left:410px;top:43px;width:783px;height:49px;background:#0d0d0d;border-radius:6px"></div>
<div class="a zl" style="left:433px">Audio</div>
<div class="a zl" style="left:498px">Video</div>
<div class="a zl" style="left:567px">Participants</div>
<div class="a zl" style="left:669px">Chat</div>
<div class="a zl" style="left:736px">Share</div>
<div class="a zl" style="left:802px">Pause</div>
<div class="a zl" style="left:866px">Layout</div>
<div class="a zl" style="left:926px">Annotate</div>
<div class="a zl" style="left:984px">Remote control</div>
<div class="a zl" style="left:1059px">Show meeting</div>
<div class="a zl" style="left:1145px">More</div>
<!-- audio -->
<svg style="left:437px;top:52px" width="18" height="20" viewBox="0 0 18 20"><rect x="6" y="1" width="6" height="11" rx="3" fill="none" stroke="#e6e6e6" stroke-width="1.4"/><path d="M3.5 9 A5.5 5.5 0 0 0 14.5 9 M9 14.5 V18 M5.5 18.5 H12.5" fill="none" stroke="#e6e6e6" stroke-width="1.4"/><path d="M1 17 L17 2" stroke="#e0245e" stroke-width="1.8"/></svg>
<svg class="chev" style="left:464px"><path d="M1 1 L4.5 4.5 L8 1"/></svg>
<!-- video -->
<svg style="left:502px;top:56px" width="18" height="13" viewBox="0 0 18 13"><rect x="0.8" y="0.8" width="11" height="11" rx="2.5" fill="none" stroke="#e6e6e6" stroke-width="1.4"/><path d="M12 4.5 L17 1.5 V11.5 L12 8.5" fill="none" stroke="#e6e6e6" stroke-width="1.4"/></svg>
<svg class="chev" style="left:529px"><path d="M1 1 L4.5 4.5 L8 1"/></svg>
<!-- participants -->
<svg style="left:584px;top:54px" width="17" height="16" viewBox="0 0 17 16"><circle cx="5.5" cy="3.5" r="2.4" fill="none" stroke="#e6e6e6" stroke-width="1.3"/><path d="M5.5 8.2 Q1.2 8.2 1.2 11.5 Q1.2 14.5 5 14.5 H7" fill="none" stroke="#e6e6e6" stroke-width="1.3"/><circle cx="11.5" cy="7" r="2.4" fill="none" stroke="#e6e6e6" stroke-width="1.3"/><rect x="7.2" y="11" width="8.8" height="4" rx="2" fill="none" stroke="#e6e6e6" stroke-width="1.3"/></svg>
<div class="a" style="left:606px;top:48px;font-size:9px;color:#d8d8d8">41</div>
<svg class="chev" style="left:626px"><path d="M1 1 L4.5 4.5 L8 1"/></svg>
<!-- chat -->
<svg style="left:668px;top:53px" width="18" height="18" viewBox="0 0 18 18"><path d="M5 3.5 Q6 1.5 10 1.5 Q15 1.5 15 6 Q15 9 13 10" fill="none" stroke="#e6e6e6" stroke-width="1.2"/><path d="M2 10 Q2 5.5 7.5 5.5 Q13 5.5 13 10 Q13 14.5 7.5 14.5 L5 14.5 L3.5 16.5 L3.5 13.5 Q2 12.5 2 10z" fill="#0d0d0d" stroke="#e6e6e6" stroke-width="1.3"/><circle cx="5" cy="10" r="0.9" fill="#e6e6e6"/><circle cx="7.5" cy="10" r="0.9" fill="#e6e6e6"/><circle cx="10" cy="10" r="0.9" fill="#e6e6e6"/></svg>
<div class="a" style="left:681px;top:48px;width:13px;height:13px;border-radius:50%;background:#e5393d;border:1px solid #0d0d0d"></div>
<div class="a" style="left:685px;top:49px;font-size:9px;color:#fff;font-weight:bold">1</div>
<svg class="chev" style="left:701px"><path d="M1 1 L4.5 4.5 L8 1"/></svg>
<!-- share -->
<div class="a" style="left:739px;top:54px;width:19px;height:16px;background:#1fd67a;border-radius:2px"></div>
<svg style="left:744px;top:57px" width="9" height="10" viewBox="0 0 9 10"><path d="M4.5 10 V2 M1 5 L4.5 1.5 L8 5" fill="none" stroke="#0a0a0a" stroke-width="1.8"/></svg>
<svg class="chev" style="left:767px"><path d="M1 1 L4.5 4.5 L8 1"/></svg>
<!-- pause -->
<div class="a" style="left:809px;top:55px;width:3.5px;height:13px;background:#f0f0f0;border-radius:1px"></div>
<div class="a" style="left:815.5px;top:55px;width:3.5px;height:13px;background:#f0f0f0;border-radius:1px"></div>
<!-- layout -->
<svg style="left:869px;top:54px" width="22" height="17" viewBox="0 0 22 17"><rect x="0.8" y="0.8" width="20" height="15" rx="2" fill="none" stroke="#e6e6e6" stroke-width="1.4"/><circle cx="7" cy="6" r="2.3" fill="#e6e6e6"/><path d="M2 15.5 Q2 10 7 10 Q12 10 12 15.5z" fill="#e6e6e6"/></svg>
<!-- annotate -->
<svg style="left:936px;top:52px" width="19" height="20" viewBox="0 0 19 20"><path d="M2 14 L12 3 L15.5 6 L5.5 17 L2 17z M10.5 4.5 L14 7.5" fill="none" stroke="#e6e6e6" stroke-width="1.3"/><path d="M1 19 H18" stroke="#e6e6e6" stroke-width="1.3"/></svg>
<!-- remote control -->
<svg style="left:1008px;top:52px" width="14" height="20" viewBox="0 0 14 20"><rect x="1" y="1" width="12" height="18" rx="6" fill="none" stroke="#e6e6e6" stroke-width="1.4"/><rect x="6" y="4" width="2" height="4" rx="1" fill="#e6e6e6"/></svg>
<!-- show meeting -->
<svg style="left:1080px;top:55px" width="20" height="14" viewBox="0 0 20 14"><path d="M1 3 Q1 1 3 1 H14 Q16 1 16 3 V6 H9 Q7 6 7 8 V12 H3 Q1 12 1 10z" fill="#f0f0f0"/><rect x="8.5" y="7" width="10.5" height="6.5" rx="2" fill="none" stroke="#f0f0f0" stroke-width="1.3"/></svg>
<!-- more -->
<svg style="left:1146px;top:52px" width="21" height="21" viewBox="0 0 21 21"><circle cx="10.5" cy="10.5" r="9.3" fill="none" stroke="#e6e6e6" stroke-width="1.4"/><circle cx="6.3" cy="10.5" r="1.2" fill="#e6e6e6"/><circle cx="10.5" cy="10.5" r="1.2" fill="#e6e6e6"/><circle cx="14.7" cy="10.5" r="1.2" fill="#e6e6e6"/></svg>
<!-- screen sharing bar -->
<div class="a" style="left:660px;top:92px;width:210px;height:18px;background:#22c760;border-radius:0 0 0 5px"></div>
<div class="a" style="left:868px;top:92px;width:75px;height:18px;background:#e42a2a;border-radius:0 0 5px 0"></div>
<svg style="left:668px;top:95px" width="11" height="11" viewBox="0 0 11 11"><path d="M1.5 4.5 L5 1 L8.5 4.5 L6.5 4.5 L6.5 6.5 Q7 9 10 9.5 L9 10.5 Q4.5 10 3.8 6.5 L3.8 4.5z" fill="#0f3a1c"/></svg>
<div class="a" style="left:703px;top:96px;font-size:9px;font-weight:bold;color:#0f2a16">You are screen sharing</div>
<svg style="left:833px;top:95px" width="8" height="11" viewBox="0 0 8 11"><rect x="2.5" y="1" width="3" height="6" rx="1.5" fill="#0f2a16"/><path d="M1 5 Q1 8 4 8 Q7 8 7 5 M4 8 V10" fill="none" stroke="#0f2a16" stroke-width="1"/><path d="M0.5 10 L7.5 1" stroke="#0f2a16" stroke-width="1.2"/></svg>
<svg style="left:853px;top:95px" width="8" height="10" viewBox="0 0 8 10"><path d="M4 0.5 L7.5 2 V5 Q7.5 8 4 9.5 Q0.5 8 0.5 5 V2z" fill="#0f2a16"/><path d="M2.3 4.8 L3.6 6 L5.8 3.6" fill="none" stroke="#22c760" stroke-width="1"/></svg>
<div class="a" style="left:875px;top:96px;width:7px;height:7px;background:#fff;border-radius:1px"></div>
<div class="a" style="left:885px;top:96px;font-size:9px;font-weight:bold;color:#fff">Stop share</div>

<!-- zoom video panel -->
<div class="a" style="left:1004px;top:88px;width:179px;height:517px;background:#0d0d0d;border-radius:0 0 4px 4px"></div>
<div class="a" style="left:1011px;top:101.5px;width:9.5px;height:2.5px;background:#dcdcdc;border-radius:1px"></div>
<div class="a" style="left:1033px;top:97.5px;width:9.5px;height:6.5px;background:#d8d8d8;border-radius:1px"></div>
<div class="a" style="left:1054.5px;top:94.5px;width:10px;height:4.5px;background:#3b8ff5;border-radius:1.5px"></div>
<div class="a" style="left:1054.5px;top:100px;width:10px;height:4.5px;background:#3b8ff5;border-radius:1.5px"></div>
<svg style="left:1075.5px;top:94px" width="12" height="12" viewBox="0 0 12 12"><g fill="#e8e8e8"><rect x="0" y="0" width="3.2" height="3.2" rx="0.6"/><rect x="4.4" y="0" width="3.2" height="3.2" rx="0.6"/><rect x="8.8" y="0" width="3.2" height="3.2" rx="0.6"/><rect x="0" y="4.4" width="3.2" height="3.2" rx="0.6"/><rect x="4.4" y="4.4" width="3.2" height="3.2" rx="0.6"/><rect x="8.8" y="4.4" width="3.2" height="3.2" rx="0.6"/><rect x="0" y="8.8" width="3.2" height="3.2" rx="0.6"/><rect x="4.4" y="8.8" width="3.2" height="3.2" rx="0.6"/><rect x="8.8" y="8.8" width="3.2" height="3.2" rx="0.6"/></g></svg>
<svg style="left:1166px;top:93px" width="13" height="13" viewBox="0 0 13 13"><path d="M1 12 L12 1 M7.5 1 H12 V5.5 M1 7.5 V12 H5.5" fill="none" stroke="#bdbdbd" stroke-width="1"/></svg>

<!-- tile 1 -->
<div class="a tile" style="left:1006px;top:110px;width:175px;height:98px;border-radius:6px 6px 0 0;background:linear-gradient(90deg,#c4c4c4 0%,#d0d0d0 10%,#d6d6d6 30%,#dedede 45%,#d4d4d4 60%,#cbcbcb 80%,#d2d2d2 100%)">
  <div class="bl" style="left:14px;top:15px;width:38px;height:90px;background:#b9ad9b;filter:blur(6px)"></div>
  <div class="bl" style="left:0px;top:14px;width:70px;height:10px;background:#a8a298;filter:blur(5px)"></div>
  <div class="bl" style="left:18px;top:-6px;width:22px;height:20px;border-radius:50%;background:#f4f4f4;filter:blur(5px)"></div>
  <div class="bl" style="left:52px;top:0px;width:22px;height:24px;border-radius:50%;background:#eeeeee;filter:blur(5px)"></div>
  <div class="bl" style="left:52px;top:40px;width:22px;height:30px;border-radius:50%;background:#e4e4e4;filter:blur(6px)"></div>
  <div class="bl" style="left:60px;top:72px;width:125px;height:50px;border-radius:50% 40% 0 0;background:#6a6e76;filter:blur(1.5px)"></div>
  <div class="bl" style="left:86px;top:68px;width:40px;height:30px;background:#8f8280;filter:blur(2px)"></div>
  <div class="bl" style="left:87px;top:20px;width:47px;height:62px;border-radius:48% 48% 46% 46%;background:linear-gradient(180deg,#8a8b8e 0%,#8e8d8f 20%,#ae9c9a 34%,#a89492 70%,#9a8684 100%);filter:blur(1.2px)"></div>
  <div class="bl" style="left:90px;top:45px;width:20px;height:14px;border:2.6px solid #2a2426;border-radius:4px;transform:rotate(4deg);filter:blur(0.5px);background:rgba(120,110,112,0.5)"></div>
  <div class="bl" style="left:111px;top:47px;width:21px;height:14px;border:2.6px solid #2a2426;border-radius:4px;transform:rotate(6deg);filter:blur(0.5px);background:rgba(120,110,112,0.5)"></div>
</div>
<div class="a lab" style="left:1009px;top:192px;width:93px"></div>
<svg class="mic" style="left:1012px;top:194px" viewBox="0 0 10 11"><rect x="3.5" y="1" width="3" height="6" rx="1.5" fill="#e0455a"/><path d="M2 5 Q2 8 5 8 Q8 8 8 5 M5 8 V10" fill="none" stroke="#e0455a" stroke-width="1"/><path d="M1 10.5 L9 0.5" stroke="#e0455a" stroke-width="1.3"/></svg>
<div class="a nm" style="left:1026px;top:193px;font-size:9.45px">Віталій Шляхетко</div>
<!-- tile 2 -->
<div class="a tile" style="left:1006px;top:209px;width:175px;height:98px;background:linear-gradient(180deg,#dcdddf 0%,#d8d9db 60%,#d4d5d7 100%)">
  <div class="bl" style="left:22px;top:70px;width:64px;height:40px;border-radius:45% 45% 0 0;background:#b6c6da;filter:blur(1.5px)"></div>
  <div class="bl" style="left:40px;top:38px;width:27px;height:30px;border-radius:50% 50% 40% 40%;background:#3a322f;filter:blur(1.2px)"></div>
  <div class="bl" style="left:44px;top:53px;width:20px;height:26px;border-radius:40% 40% 50% 50%;background:linear-gradient(180deg,#d4b8ae,#bea096);filter:blur(1px)"></div>
  <div class="bl" style="left:114px;top:68px;width:64px;height:40px;border-radius:35% 35% 0 0;background:#5f6064;filter:blur(1.2px)"></div>
  <div class="bl" style="left:148px;top:82px;width:20px;height:20px;background:#eceae8;filter:blur(1px)"></div>
  <div class="bl" style="left:126px;top:18px;width:49px;height:58px;border-radius:48% 48% 35% 35%;background:#4a2c22;filter:blur(1.8px)"></div>
  <div class="bl" style="left:124px;top:52px;width:20px;height:24px;border-radius:40%;background:#6a3a26;filter:blur(2px)"></div>
  <div class="bl" style="left:163px;top:52px;width:14px;height:26px;border-radius:40%;background:#5e3424;filter:blur(2px)"></div>
  <div class="bl" style="left:140px;top:28px;width:28px;height:37px;border-radius:45% 45% 50% 50%;background:#d0a898;filter:blur(1.2px)"></div>
  <div class="bl" style="left:144px;top:62px;width:18px;height:20px;background:#c9a497;filter:blur(2px)"></div>
</div>
<div class="a lab" style="left:1009px;top:290px;width:105px"></div>
<svg class="mic" style="left:1012px;top:292px" viewBox="0 0 10 11"><rect x="3.5" y="1" width="3" height="6" rx="1.5" fill="#e0455a"/><path d="M2 5 Q2 8 5 8 Q8 8 8 5 M5 8 V10" fill="none" stroke="#e0455a" stroke-width="1"/><path d="M1 10.5 L9 0.5" stroke="#e0455a" stroke-width="1.3"/></svg>
<div class="a nm" style="left:1026px;top:291px;font-size:9.6px">Наталія Розумович</div>
<!-- tile 3 -->
<div class="a tile" style="left:1006px;top:308px;width:175px;height:98px;background:#252525">
  <div class="a" style="left:50px;top:0;width:74px;height:98px;overflow:hidden;background:#1e1612">
    <div class="bl" style="left:-6px;top:20px;width:34px;height:75px;background:repeating-linear-gradient(180deg,#b27a44 0px,#b27a44 6px,#8e5c30 7px,#b27a44 8px);filter:blur(1.5px)"></div>
    <div class="bl" style="left:-6px;top:-6px;width:22px;height:30px;background:#b8b8c0;filter:blur(4px)"></div>
    <div class="bl" style="left:36px;top:0px;width:40px;height:98px;background:linear-gradient(180deg,#3a2418 0%,#1e120c 60%,#0c0808 100%);filter:blur(3px)"></div>
    <div class="bl" style="left:10px;top:-10px;width:30px;height:42px;border-radius:45%;background:#fffef8;filter:blur(5px)"></div>
    <div class="bl" style="left:15px;top:-6px;width:18px;height:30px;border-radius:45%;background:#ffffff;filter:blur(2.5px)"></div>
    <div class="bl" style="left:44px;top:38px;width:6px;height:16px;background:#9aa8c0;filter:blur(1.5px)"></div>
    <div class="bl" style="left:10px;top:58px;width:80px;height:50px;border-radius:55% 45% 0 0;background:#161414;filter:blur(1.5px)"></div>
    <div class="bl" style="left:26px;top:49px;width:14px;height:9px;background:#d8d0c8;filter:blur(1.2px)"></div>
    <div class="bl" style="left:23px;top:27px;width:22px;height:29px;border-radius:45% 45% 50% 50%;background:linear-gradient(180deg,#d0c2ba,#a09088);filter:blur(1px)"></div>
  </div>
</div>
<div class="a lab" style="left:1009px;top:390px;width:82px"></div>
<div class="a nm" style="left:1011px;top:390.5px;font-size:9.9px">Штангрет Андрій</div>
<!-- tile 4 -->
<div class="a tile" style="left:1006px;top:407px;width:175px;height:98px;background:radial-gradient(ellipse 110px 80px at 60px 30px,#172a20,#0d1510 100%)">
  <div class="bl" style="left:0;top:0;width:20px;height:98px;background:#0a0e0c;filter:blur(5px)"></div>
  <div class="bl" style="left:122px;top:-10px;width:70px;height:115px;background:#060606;filter:blur(5px)"></div>
  <div class="bl" style="left:34px;top:62px;width:100px;height:45px;border-radius:40% 40% 0 0;background:#171212;filter:blur(2px)"></div>
  <div class="bl" style="left:74px;top:14px;width:52px;height:40px;border-radius:50% 50% 35% 35%;background:#0e0b0b;filter:blur(1.5px)"></div>
  <div class="bl" style="left:84px;top:38px;width:34px;height:46px;border-radius:40% 40% 48% 48%;background:linear-gradient(180deg,#bcb2aa 0%,#b0a49c 50%,#8a7e78 100%);filter:blur(1.3px)"></div>
  <div class="bl" style="left:78px;top:28px;width:44px;height:16px;border-radius:50% 50% 40% 40%;background:#0e0b0b;filter:blur(1.5px)"></div>
  <div class="bl" style="left:90px;top:56px;width:8px;height:2.5px;background:#4a403c;filter:blur(0.8px)"></div>
  <div class="bl" style="left:104px;top:56px;width:8px;height:2.5px;background:#4a403c;filter:blur(0.8px)"></div>
</div>
<div class="a lab" style="left:1009px;top:489px;width:106px"></div>
<svg class="mic" style="left:1012px;top:491px" viewBox="0 0 10 11"><rect x="3.5" y="1" width="3" height="6" rx="1.5" fill="#e0455a"/><path d="M2 5 Q2 8 5 8 Q8 8 8 5 M5 8 V10" fill="none" stroke="#e0455a" stroke-width="1"/><path d="M1 10.5 L9 0.5" stroke="#e0455a" stroke-width="1.3"/></svg>
<div class="a nm" style="left:1026px;top:490px;font-size:9.3px">Nazar Blesko_ChNU</div>
<!-- tile 5 -->
<div class="a" style="left:1005px;top:504.5px;width:177px;height:100px;border:2px solid #26d98a;border-radius:3px;background:#1c1c1c;overflow:hidden">
  <div class="a" style="left:0;top:0;width:173px;height:77px;overflow:hidden;background:linear-gradient(90deg,#8c8e8a 0%,#969894 35%,#a4a6a2 55%,#b8bcb8 70%,#d4dcd8 85%,#c0c6c2 100%)">
    <div class="bl" style="left:120px;top:-10px;width:60px;height:50px;background:#e0e4e2;filter:blur(8px)"></div>
    <div class="bl" style="left:64px;top:2px;width:66px;height:90px;border-radius:45% 45% 20% 20%;background:#5e4a3c;filter:blur(2px)"></div>
    <div class="bl" style="left:112px;top:30px;width:18px;height:55px;border-radius:40%;background:#b09a84;filter:blur(2px)"></div>
    <div class="bl" style="left:72px;top:10px;width:36px;height:70px;border-radius:45% 45% 45% 45%;background:linear-gradient(180deg,#dcc0b4 0%,#d8b0a8 40%,#cc9c94 70%,#b88a80 100%);filter:blur(1.2px)"></div>
    <div class="bl" style="left:78px;top:36px;width:8px;height:3px;background:#7a5a56;filter:blur(1px)"></div>
    <div class="bl" style="left:94px;top:36px;width:8px;height:3px;background:#7a5a56;filter:blur(1px)"></div>
    <div class="bl" style="left:84px;top:58px;width:12px;height:4px;border-radius:50%;background:#b87070;filter:blur(1px)"></div>
  </div>
  <svg style="left:82px;top:85px" width="11" height="6" viewBox="0 0 11 6"><path d="M1 1 L5.5 5 L10 1" fill="none" stroke="#eee" stroke-width="1.5"/></svg>
</div>
<div class="a lab" style="left:1009px;top:565px;width:68px"></div>
<div class="a nm" style="left:1011px;top:566px;font-size:10px">Дар’я Шевчук</div>


</body></html>
